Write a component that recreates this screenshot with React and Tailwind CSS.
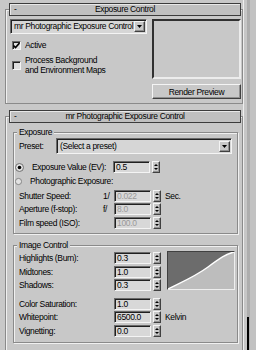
import { useState } from "react";

// 3ds Max style "Exposure Control" rollouts.

const sunken =
    "border border-t-[#6a6a6a] border-l-[#6a6a6a] border-b-[#f4f4f4] border-r-[#f4f4f4] shadow-[inset_1px_1px_0_#202020]";
const raised =
    "border border-t-[#f4f4f4] border-l-[#f4f4f4] border-b-[#404040] border-r-[#404040] shadow-[inset_-1px_-1px_0_#909090]";

function RolloutHeader({ title }) {
    return (
        <div className="relative -mt-[7px] ml-[3px] mr-[1px] flex h-[13px] items-center border border-[#3c3c3c] bg-[#c0c0c0] shadow-[inset_1px_1px_0_#e8e8e8] leading-[11px]">
            <span className="ml-[4px] w-[10px]">-</span>
            <span className="flex-1 pr-[14px] text-center">{title}</span>
        </div>
    );
}

function Arrow() {
    return (
        <svg width="5" height="3" viewBox="0 0 5 3">
            <path d="M0 0h5L2.5 3z" fill="#000" />
        </svg>
    );
}

function Dropdown({ value, className = "" }) {
    return (
        <div className={`flex items-center bg-[#d6d6d6] pl-[3px] pr-[1px] ${sunken} ${className}`}>
            <span className="flex-1 overflow-hidden whitespace-nowrap leading-[11px]">{value}</span>
            <span className={`flex h-[11px] w-[11px] shrink-0 items-center justify-center bg-[#c8c8c8] ${raised}`}>
                <Arrow />
            </span>
        </div>
    );
}

function SpinButton() {
    return (
        <div className={`ml-[2px] flex h-[12px] w-[8px] flex-col items-center justify-center gap-[2px] bg-[#c8c8c8] ${raised}`}>
            <svg width="4" height="2" viewBox="0 0 4 2">
                <path d="M2 0L4 2H0z" fill="#000" />
            </svg>
            <svg width="4" height="2" viewBox="0 0 4 2">
                <path d="M0 0h4L2 2z" fill="#000" />
            </svg>
        </div>
    );
}

function Spinner({ value, disabled }) {
    return (
        <div className="flex items-center">
            <div className={`flex h-[12px] w-[37px] items-center bg-[#d8d8d8] pl-[2px] leading-[10px] ${sunken} ${disabled ? "text-[#9a9a9a]" : ""}`}>
                {value}
            </div>
            <SpinButton />
        </div>
    );
}

function Row({ label, prefix, value, disabled, unit }) {
    return (
        <div className="flex h-[13.5px] items-center pl-[5px]">
            <span className="w-[84px] whitespace-nowrap">{label}</span>
            <span className="w-[11px]">{prefix}</span>
            <Spinner value={value} disabled={disabled} />
            {unit && <span className="ml-[4px]">{unit}</span>}
        </div>
    );
}

function Group({ title, className = "", children }) {
    return (
        <div className={`ml-[7px] w-[225px] border border-[#8a8a8a] shadow-[inset_1px_1px_0_#f0f0f0,1px_1px_0_#f0f0f0] ${className}`}>
            <div className="-mt-[7px] ml-[3px] w-fit bg-[#c8c8c8] px-[2px] leading-[12px]">{title}</div>
            {children}
        </div>
    );
}

function Radio({ checked, label }) {
    return (
        <div className="flex h-[14px] w-[99px] items-center pl-[1px]">
            <svg width="9" height="9" viewBox="0 0 9 9">
                <circle cx="4.5" cy="4.5" r="4" fill="#e2e2e2" stroke="#707070" strokeWidth="1" />
                {checked && <circle cx="4.5" cy="4.5" r="1.8" fill="#000" />}
            </svg>
            <span className="ml-[8px] whitespace-nowrap">{label}</span>
        </div>
    );
}

function Check({ checked, children }) {
    return (
        <div className="flex items-center">
            <span className={`flex h-[9px] w-[9px] shrink-0 items-center justify-center bg-[#e0e0e0] ${sunken}`}>
                {checked && (
                    <svg width="7" height="7" viewBox="0 0 7 7">
                        <path d="M0.5 3.5l2 2 4-4.5" fill="none" stroke="#000" strokeWidth="1.6" />
                    </svg>
                )}
            </span>
            <span className="ml-[4px] leading-[10px]">{children}</span>
        </div>
    );
}

export default function App() {
    const [active] = useState(true);

    return (
        <div className="flex h-[350px] w-[256px] overflow-hidden bg-[#c8c8c8] font-['Liberation_Sans',Arial,sans-serif] text-[8.5px] leading-[10px] tracking-[-0.35px] text-black">
            <div className="w-[243px]">
                {/* Exposure Control rollout */}
                <div className="ml-[5px] mt-[9px] w-[238px] border border-[#8a8a8a] pb-[4px] shadow-[inset_1px_1px_0_#f0f0f0]">
                    <RolloutHeader title="Exposure Control" />
                    <div className="mt-[3px] flex">
                        <div className="ml-[4px] w-[137px]">
                            <Dropdown value="mr Photographic Exposure Control" className="h-[15px]" />
                            <div className="ml-[2px] mt-[6px]">
                                <Check checked={active}>Active</Check>
                            </div>
                            <div className="ml-[2px] mt-[5px]">
                                <Check>
                                    Process Background
                                    <br />
                                    and Environment Maps
                                </Check>
                            </div>
                        </div>
                        <div className="ml-auto mr-[1px] w-[89px]">
                            <div className="h-[60px] border-2 border-t-[#303030] border-l-[#303030] border-b-[#ececec] border-r-[#ececec] bg-[#c8c8c8]" />
                            <div className={`mt-[5px] flex h-[15px] items-center justify-center bg-[#c8c8c8] ${raised}`}>
                                Render Preview
                            </div>
                        </div>
                    </div>
                </div>

                {/* mr Photographic Exposure Control rollout */}
                <div className="ml-[5px] mt-[12px] h-[300px] w-[238px] border border-b-0 border-[#8a8a8a] shadow-[inset_1px_1px_0_#f0f0f0]">
                    <RolloutHeader title="mr Photographic Exposure Control" />

                    <Group title="Exposure" className="mt-[9px] pb-[3px]">
                        <div className="flex h-[16px] items-center pl-[5px]">
                            <span className="w-[37px]">Preset:</span>
                            <Dropdown value="(Select a preset)" className="h-[16px] w-[176px]" />
                        </div>
                        <div className="mt-[6px]">
                            <div className="flex h-[14px] items-center">
                                <Radio checked label="Exposure Value (EV):" />
                                <Spinner value="0.5" />
                            </div>
                            <Radio label="Photographic Exposure:" />
                            <div className="mt-[1px]">
                                <Row label="Shutter Speed:" prefix="1/" value="0.022" disabled unit="Sec." />
                                <Row label="Aperture (f-stop):" prefix="f/" value="8.0" disabled />
                                <Row label="Film speed (ISO):" value="100.0" disabled />
                            </div>
                        </div>
                    </Group>

                    <Group title="Image Control" className="mt-[11px] pb-[4px]">
                        <div className="flex">
                            <div className="mt-[1px]">
                                <Row label="Highlights (Burn):" value="0.3" />
                                <Row label="Midtones:" value="1.0" />
                                <Row label="Shadows:" value="0.3" />
                            </div>
                            <div className="ml-auto mr-[2px] h-[39px] w-[68px] border border-t-[#404040] border-l-[#404040] border-b-[#eeeeee] border-r-[#eeeeee]">
                                <svg width="66" height="37" viewBox="0 0 66 37" className="block">
                                    <rect width="66" height="37" fill="#bdbdbd" />
                                    <path d="M0 37 C 14 30, 28 24, 40 15 S 58 2, 66 0 L0 0z" fill="#6c6c6c" />
                                    <path d="M0 37 C 14 30, 28 24, 40 15 S 58 2, 66 0" fill="none" stroke="#fff" strokeWidth="1.4" />
                                </svg>
                            </div>
                        </div>
                        <div className="mt-[5px]">
                            <Row label="Color Saturation:" value="1.0" />
                            <Row label="Whitepoint:" value="6500.0" unit="Kelvin" />
                            <Row label="Vignetting:" value="0.0" />
                        </div>
                    </Group>
                </div>
            </div>

            {/* scroll strip */}
            <div className="flex w-[13px]">
                <div className="w-[4px] border-l border-[#eeeeee] bg-[#c6c6c6]" />
                <div className="flex w-[3px] flex-col bg-[#adadad]">
                    <div className="flex-1" />
                    <div className="h-[33px] w-[2px] bg-black" />
                </div>
                <div className="flex-1 bg-[#c2c2c2]" />
            </div>
        </div>
    );
}
